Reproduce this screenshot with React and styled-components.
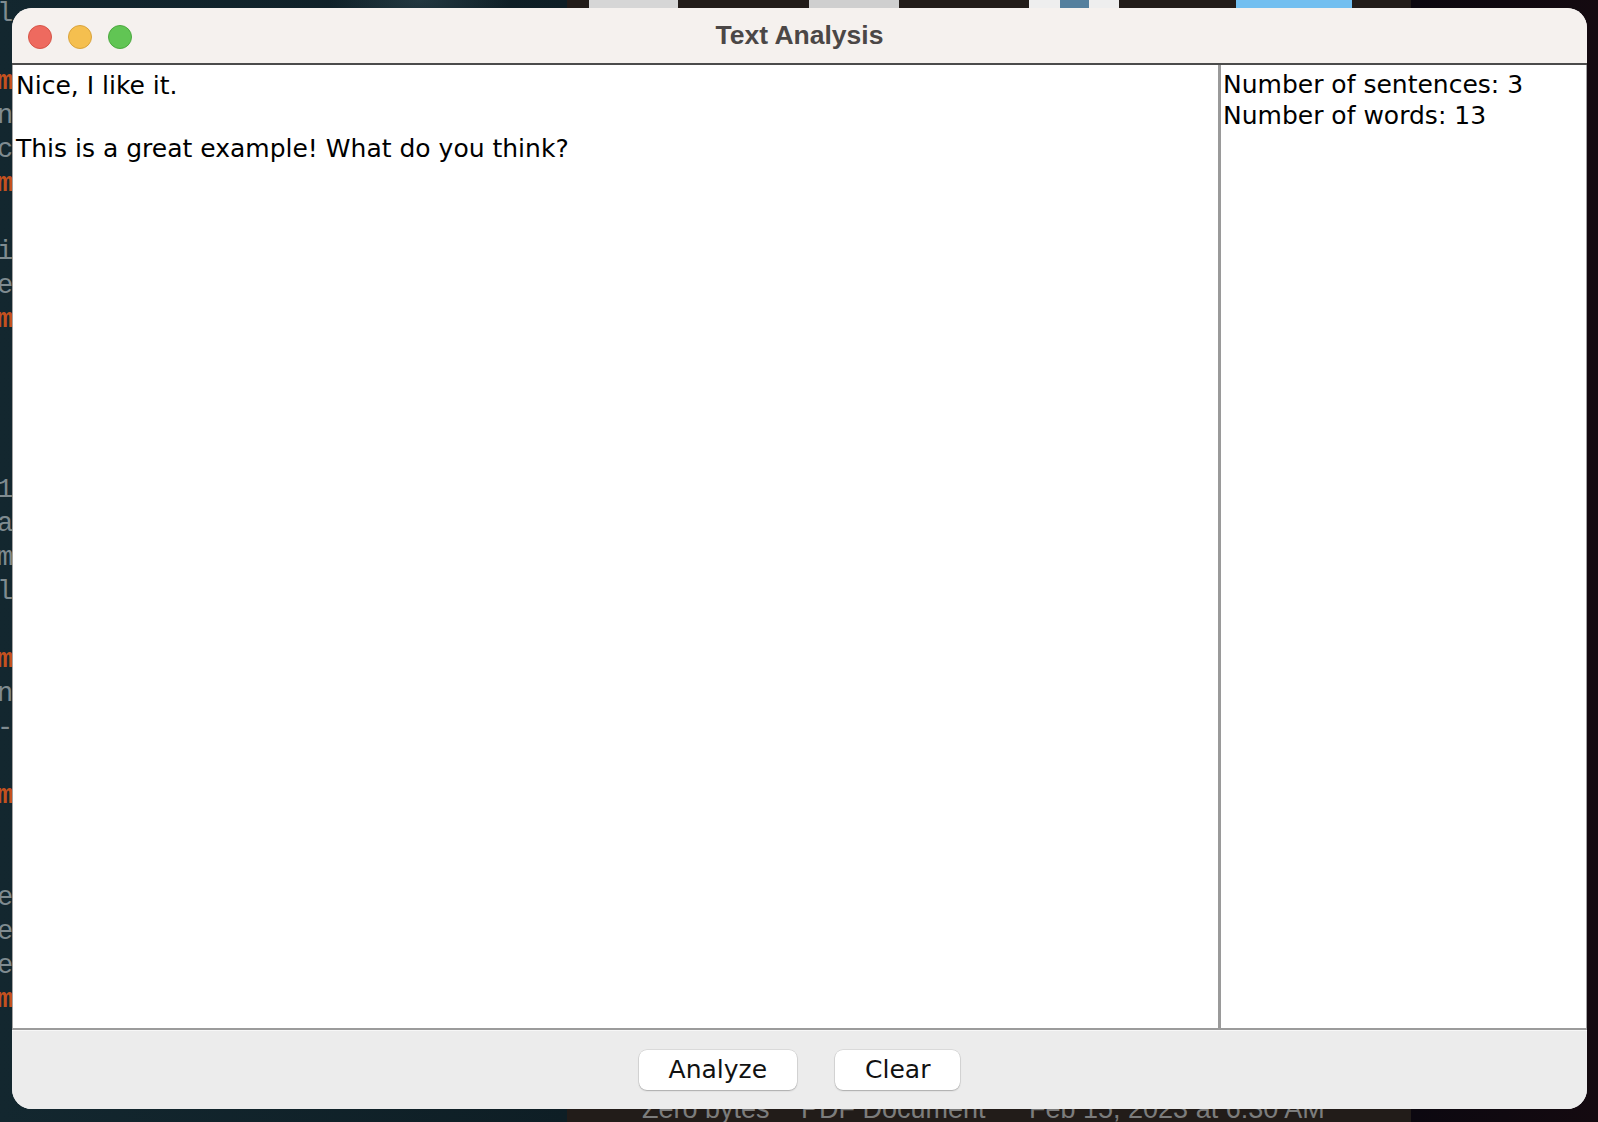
import styled, { createGlobalStyle } from 'styled-components'

// Data
const codeLines = [
  'l', '', 'm*', 'n', 'c', 'm*', '', 'i', 'e', 'm*',
  '', '', '', '', '1', 'a', 'm', 'l', '', 'm*',
  'n', '-', '', 'm*', '', '', 'e', 'e', 'e', 'm*',
]

const thumbs = [
  { left: 589, width: 89, color: '#d6d6d6' },
  { left: 809, width: 90, color: '#cfcfcf' },
  { left: 1029, width: 90, color: '#eeeeee', band: true },
  { left: 1236, width: 116, color: '#72bff0' },
]

const finderCells = [
  { left: 642, text: 'Zero bytes' },
  { left: 801, text: 'PDF Document' },
  { left: 1029, text: 'Feb 15, 2023 at 6:30 AM' },
]

const sourceText = 'Nice, I like it.\n\nThis is a great example! What do you think?'

// App
const App = () => {
  return (
    <>
      <GlobalStyle />
      <Desktop>
        <CodeColumn>
          {codeLines.map((line, i) => (
            <CodeLine key={i} $accent={line.endsWith('*')}>{line.replace('*', '')}</CodeLine>
          ))}
        </CodeColumn>
        {thumbs.map((t, i) => (
          <Thumb key={i} $left={t.left} $width={t.width} $color={t.color}>
            {t.band && <ThumbBand />}
          </Thumb>
        ))}
        {finderCells.map((c, i) => (
          <FinderCell key={i} $left={c.left}>{c.text}</FinderCell>
        ))}

        <Window>
          <TitleBar>
            <Lights>
              <Light $fill="#ee6a5f" $edge="#d65548" />
              <Light $fill="#f5bf4f" $edge="#d9a33c" />
              <Light $fill="#61c554" $edge="#4ca83f" />
            </Lights>
            <Title>Text Analysis</Title>
            <span />
          </TitleBar>

          <Content>
            <TextPane $pad="5px 1px 0 3px">{sourceText}</TextPane>
            <Divider />
            <ResultPane $pad="4px 1px 0 2px">
              {'Number of sentences: 3\nNumber of words: 13'}
            </ResultPane>
          </Content>

          <ButtonBar>
            <Button>Analyze</Button>
            <Button>Clear</Button>
          </ButtonBar>
        </Window>
      </Desktop>
    </>
  )
}

// Styles
const GlobalStyle = createGlobalStyle`
  html, body { margin: 0; padding: 0; }
  body {
    background: #0f1f26;
    font-family: "DejaVu Sans", "Noto Sans", sans-serif;
  }
`

const Desktop = styled.div`
  position: relative;
  width: 1598px;
  height: 1122px;
  box-sizing: border-box;
  padding: 8px 11px 13px 12px;
  display: flex;
  overflow: hidden;
  background:
    radial-gradient(ellipse 90px 40px at 420px 0, rgba(70, 100, 110, 0.35), transparent),
    linear-gradient(to right, #13272f 0, #0e1e25 567px, #221c19 567px, #221c19 1411px, #0c0810 1411px, #140a10 100%);
`

const CodeColumn = styled.div`
  position: absolute;
  top: -3px;
  left: -3px;
  font-family: "Liberation Mono", monospace;
  font-size: 27px;
  line-height: 34px;
`

const CodeLine = styled.div`
  height: 34px;
  color: ${p => (p.$accent ? '#c4511f' : '#7f8b90')};
  font-weight: ${p => (p.$accent ? 700 : 400)};
`

const Thumb = styled.div`
  position: absolute;
  top: 0;
  left: ${p => p.$left}px;
  width: ${p => p.$width}px;
  height: 10px;
  background: ${p => p.$color};
  display: flex;
  justify-content: center;
`

const ThumbBand = styled.div`
  width: 29px;
  background: #55809e;
`

const FinderCell = styled.div`
  position: absolute;
  top: 1096px;
  left: ${p => p.$left}px;
  font-family: "Liberation Sans", Arial, sans-serif;
  font-size: 27px;
  line-height: 1;
  color: #7c7c7c;
  white-space: nowrap;
`

const Window = styled.div`
  position: relative;
  z-index: 1;
  flex: 1;
  display: flex;
  flex-direction: column;
  border-radius: 20px;
  overflow: hidden;
  background: #ececec;
`

const TitleBar = styled.div`
  height: 55px;
  flex: none;
  display: grid;
  grid-template-columns: 1fr auto 1fr;
  align-items: center;
  padding: 0 0 0 16px;
  background: #f5f1ee;
  border-bottom: 2px solid #4b4b4b;
`

const Lights = styled.div`
  display: flex;
  gap: 16px;
  margin-top: 1px;
`

const Light = styled.div`
  width: 24px;
  height: 24px;
  box-sizing: border-box;
  border-radius: 50%;
  background: ${p => p.$fill};
  border: 1px solid ${p => p.$edge};
`

const Title = styled.div`
  font-family: "Liberation Sans", Arial, sans-serif;
  font-weight: 700;
  font-size: 26.5px;
  color: #4b4746;
  line-height: 55px;
  padding-bottom: 2px;
  margin-left: -16px;
`

const Content = styled.div`
  flex: 1;
  display: flex;
  min-height: 0;
  background: #ffffff;
  border-left: 1px solid #a3a3a3;
  border-right: 1px solid #a3a3a3;
  border-bottom: 2px solid #9b9b9b;
  box-shadow: 0 1px 0 #f7f7f7;
  margin-bottom: 1px;
`

const TextPane = styled.div`
  flex: 1;
  padding: ${p => p.$pad};
  font-size: 25px;
  line-height: 31.4px;
  color: #000;
  white-space: pre-wrap;
`

const ResultPane = styled(TextPane)`
  flex: none;
  width: 362px;
`

const Divider = styled.div`
  width: 3px;
  flex: none;
  background: #9a9a9a;
`

const ButtonBar = styled.div`
  height: 78px;
  flex: none;
  display: flex;
  align-items: center;
  justify-content: center;
  gap: 38px;
  background: #ececec;
`

const Button = styled.button`
  height: 40px;
  padding: 0 30px;
  border: none;
  border-radius: 8px;
  background: #ffffff;
  font-family: "DejaVu Sans", sans-serif;
  font-size: 25px;
  line-height: 40px;
  color: #111;
  box-shadow: 0 0 0 0.5px rgba(0, 0, 0, 0.14), 0 1px 1.5px rgba(0, 0, 0, 0.22);
  cursor: pointer;
`

export default App
